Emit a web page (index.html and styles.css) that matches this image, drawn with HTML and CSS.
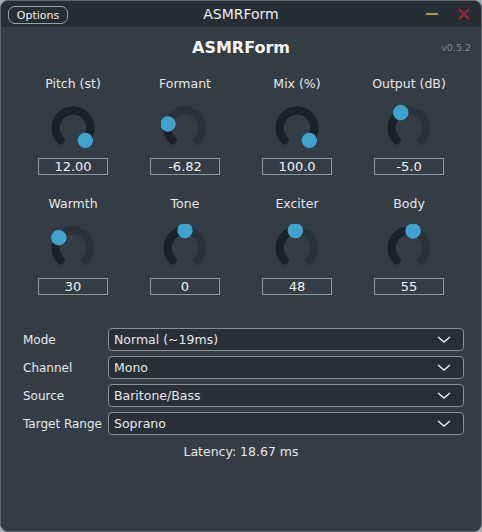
FILE: index.html
```html
<!DOCTYPE html>
<html lang="en">
<head>
<meta charset="UTF-8">
<meta name="viewport" content="width=device-width, initial-scale=1.0">
<title>ASMRForm</title>
<link rel="stylesheet" href="styles.css">
</head>
<body>
<div class="window">
  <div class="titlebar">
    <div class="titlebar-left">
      <button class="options-btn">Options</button>
    </div>
    <span class="titlebar-name">ASMRForm</span>
    <div class="win-controls">
      <svg class="win-btn" width="14" height="14" viewBox="0 0 14 14"><line x1="1" y1="7" x2="13" y2="7" stroke="#a89a40" stroke-width="2"/></svg>
      <svg class="win-btn" width="14" height="14" viewBox="0 0 14 14"><path d="M2 2 L12 12 M12 2 L2 12" stroke="#9c2231" stroke-width="2"/></svg>
    </div>
  </div>

  <div class="panel">
    <div class="header">
      <span></span>
      <h1>ASMRForm</h1>
      <span class="version">v0.5.2</span>
    </div>

    <div class="knobs">
      <!-- each knob: 270deg track, value arc, thumb rotated to the value -->
      <div class="knob">
        <span class="knob-label">Pitch (st)</span>
        <svg class="dial" width="48" height="48" viewBox="0 0 48 48">
          <circle class="track" cx="24" cy="24" r="17.5" stroke-dasharray="82.47 200" transform="rotate(135 24 24)"/>
          <circle class="value" cx="24" cy="24" r="17.5" stroke-dasharray="82.47 200" transform="rotate(135 24 24)"/>
          <circle class="thumb" cx="24" cy="6.5" r="7.7" transform="rotate(135 24 24)"/>
        </svg>
        <div class="value-box">12.00</div>
      </div>
      <div class="knob">
        <span class="knob-label">Formant</span>
        <svg class="dial" width="48" height="48" viewBox="0 0 48 48">
          <circle class="track" cx="24" cy="24" r="17.5" stroke-dasharray="82.47 200" transform="rotate(135 24 24)"/>
          <circle class="value" cx="24" cy="24" r="17.5" stroke-dasharray="17.8 200" transform="rotate(135 24 24)"/>
          <circle class="thumb" cx="24" cy="6.5" r="7.7" transform="rotate(-76.7 24 24)"/>
        </svg>
        <div class="value-box">-6.82</div>
      </div>
      <div class="knob">
        <span class="knob-label">Mix (%)</span>
        <svg class="dial" width="48" height="48" viewBox="0 0 48 48">
          <circle class="track" cx="24" cy="24" r="17.5" stroke-dasharray="82.47 200" transform="rotate(135 24 24)"/>
          <circle class="value" cx="24" cy="24" r="17.5" stroke-dasharray="82.47 200" transform="rotate(135 24 24)"/>
          <circle class="thumb" cx="24" cy="6.5" r="7.7" transform="rotate(135 24 24)"/>
        </svg>
        <div class="value-box">100.0</div>
      </div>
      <div class="knob">
        <span class="knob-label">Output (dB)</span>
        <svg class="dial" width="48" height="48" viewBox="0 0 48 48">
          <circle class="track" cx="24" cy="24" r="17.5" stroke-dasharray="82.47 200" transform="rotate(135 24 24)"/>
          <circle class="value" cx="24" cy="24" r="17.5" stroke-dasharray="32.7 200" transform="rotate(135 24 24)"/>
          <circle class="thumb" cx="24" cy="6.5" r="7.7" transform="rotate(-28 24 24)"/>
        </svg>
        <div class="value-box">-5.0</div>
      </div>
      <div class="knob">
        <span class="knob-label">Warmth</span>
        <svg class="dial" width="48" height="48" viewBox="0 0 48 48">
          <circle class="track" cx="24" cy="24" r="17.5" stroke-dasharray="82.47 200" transform="rotate(135 24 24)"/>
          <circle class="value" cx="24" cy="24" r="17.5" stroke-dasharray="24.74 200" transform="rotate(135 24 24)"/>
          <circle class="thumb" cx="24" cy="6.5" r="7.7" transform="rotate(-54 24 24)"/>
        </svg>
        <div class="value-box">30</div>
      </div>
      <div class="knob">
        <span class="knob-label">Tone</span>
        <svg class="dial" width="48" height="48" viewBox="0 0 48 48">
          <circle class="track" cx="24" cy="24" r="17.5" stroke-dasharray="82.47 200" transform="rotate(135 24 24)"/>
          <circle class="value" cx="24" cy="24" r="17.5" stroke-dasharray="41.23 200" transform="rotate(135 24 24)"/>
          <circle class="thumb" cx="24" cy="6.5" r="7.7"/>
        </svg>
        <div class="value-box">0</div>
      </div>
      <div class="knob">
        <span class="knob-label">Exciter</span>
        <svg class="dial" width="48" height="48" viewBox="0 0 48 48">
          <circle class="track" cx="24" cy="24" r="17.5" stroke-dasharray="82.47 200" transform="rotate(135 24 24)"/>
          <circle class="value" cx="24" cy="24" r="17.5" stroke-dasharray="39.58 200" transform="rotate(135 24 24)"/>
          <circle class="thumb" cx="24" cy="6.5" r="7.7" transform="rotate(-5.4 24 24)"/>
        </svg>
        <div class="value-box">48</div>
      </div>
      <div class="knob">
        <span class="knob-label">Body</span>
        <svg class="dial" width="48" height="48" viewBox="0 0 48 48">
          <circle class="track" cx="24" cy="24" r="17.5" stroke-dasharray="82.47 200" transform="rotate(135 24 24)"/>
          <circle class="value" cx="24" cy="24" r="17.5" stroke-dasharray="45.36 200" transform="rotate(135 24 24)"/>
          <circle class="thumb" cx="24" cy="6.5" r="7.7" transform="rotate(13.5 24 24)"/>
        </svg>
        <div class="value-box">55</div>
      </div>
    </div>

    <div class="selects">
      <span class="select-label">Mode</span>
      <div class="select">Normal (~19ms)<svg class="chevron" width="14" height="7" viewBox="0 0 14 7"><path d="M1 1 L7 6 L13 1" fill="none" stroke="#e8eaec" stroke-width="1.5"/></svg></div>
      <span class="select-label">Channel</span>
      <div class="select">Mono<svg class="chevron" width="14" height="7" viewBox="0 0 14 7"><path d="M1 1 L7 6 L13 1" fill="none" stroke="#e8eaec" stroke-width="1.5"/></svg></div>
      <span class="select-label">Source</span>
      <div class="select">Baritone/Bass<svg class="chevron" width="14" height="7" viewBox="0 0 14 7"><path d="M1 1 L7 6 L13 1" fill="none" stroke="#e8eaec" stroke-width="1.5"/></svg></div>
      <span class="select-label">Target Range</span>
      <div class="select">Soprano<svg class="chevron" width="14" height="7" viewBox="0 0 14 7"><path d="M1 1 L7 6 L13 1" fill="none" stroke="#e8eaec" stroke-width="1.5"/></svg></div>
    </div>

    <p class="latency">Latency: 18.67 ms</p>
  </div>
</div>
</body>
</html>
```

FILE: styles.css
```css
body {
  margin: 0;
  padding: 0;
  background-color: #a9aeb2;
  font-family: "DejaVu Sans", Verdana, sans-serif;
  color: #e6e8ea;
}

.window {
  width: 482px;
  height: 532px;
  box-sizing: border-box;
  border: 1px solid #5e676e;
  border-radius: 8px;
  overflow: hidden;
  background-color: #343d44;
  display: flex;
  flex-direction: column;
}

.titlebar {
  height: 26px;
  background-color: #262d33;
  display: grid;
  grid-template-columns: 1fr auto 1fr;
  align-items: center;
}

.titlebar-left {
  padding-left: 7px;
}

.options-btn {
  width: 60px;
  height: 18px;
  padding: 0;
  margin-top: 1px;
  font-family: inherit;
  font-size: 11px;
  color: #f0f0f0;
  background-color: transparent;
  border: 1px solid #9aa2a8;
  border-radius: 7px;
}

.titlebar-name {
  font-size: 14px;
  color: #eceeef;
}

.win-controls {
  display: flex;
  justify-content: flex-end;
  gap: 18px;
  padding-right: 10px;
}

.win-btn {
  display: block;
}

.panel {
  flex: 1;
  padding-top: 10px;
}

.header {
  display: grid;
  grid-template-columns: 1fr auto 1fr;
  align-items: center;
  height: 20px;
}

.header h1 {
  margin: 0;
  font-size: 16px;
  font-weight: bold;
  color: #f4f4f4;
}

.version {
  justify-self: end;
  padding-right: 10px;
  font-size: 9.5px;
  color: #7f888e;
}

.knobs {
  display: grid;
  grid-template-columns: repeat(4, 112px);
  row-gap: 21px;
  padding-left: 16px;
  margin-top: 19px;
}

.knob {
  display: flex;
  flex-direction: column;
  align-items: center;
}

.knob-label {
  font-size: 12.5px;
  line-height: 16px;
}

.dial {
  display: block;
  margin-top: 12px;
  margin-bottom: 6px;
}

.dial circle {
  fill: none;
  stroke-width: 8;
  stroke-linecap: round;
}

.dial .track {
  stroke: #2a3238;
}

.dial .value {
  stroke: #1b2125;
}

.dial .thumb {
  fill: #3fa3d0;
  stroke: none;
}

.value-box {
  width: 70px;
  height: 17px;
  box-sizing: border-box;
  border: 1px solid #8e969b;
  font-size: 13px;
  line-height: 15px;
  text-align: center;
  color: #f2f2f2;
}

.selects {
  display: grid;
  grid-template-columns: 85px 1fr;
  grid-auto-rows: 23px;
  row-gap: 5px;
  align-items: center;
  padding: 0 17px 0 22px;
  margin-top: 33px;
}

.select-label {
  font-size: 12px;
  white-space: nowrap;
}

.select {
  height: 23px;
  box-sizing: border-box;
  border: 1px solid #879096;
  border-radius: 4px;
  background-color: #283036;
  padding: 0 12px 0 5px;
  font-size: 12.5px;
  display: flex;
  align-items: center;
  justify-content: space-between;
}

.chevron {
  display: block;
}

.latency {
  margin: 9px 0 0;
  font-size: 12.5px;
  line-height: 16px;
  text-align: center;
}
```
